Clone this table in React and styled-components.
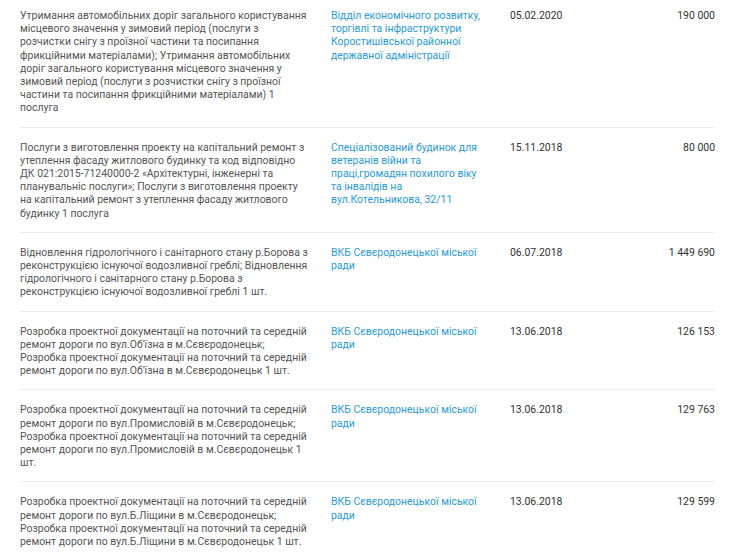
import React from "react"
import styled, { createGlobalStyle } from "styled-components"

const GlobalStyle = createGlobalStyle`
  html, body {
    margin: 0;
    padding: 0;
    background: #fff;
  }
  body {
    font-family: Roboto, "Liberation Sans", Arial, sans-serif;
    font-size: 10.45px;
    line-height: 13.2px;
  }
`

const Table = styled.section`
  width: 695px;
  margin: -4px 0 0 20px;
`

const Row = styled.div`
  display: grid;
  grid-template-columns: 311px 179px 1fr auto;
  padding: 13px 0 12px;
  border-bottom: 1px solid ${p => (p.last ? "transparent" : "#ececec")};
`

const Description = styled.p`
  margin: 0;
  padding-right: 23px;
  color: #555;
`

const Buyer = styled.a`
  display: block;
  padding-right: 24px;
  color: #2b9ad6;
  text-decoration: none;
  cursor: pointer;
`

const Date = styled.span`
  color: #333;
`

const Amount = styled.span`
  color: #333;
  text-align: right;
`

const rows = [
  {
    text: "Утримання автомобільних доріг загального користування місцевого значення у зимовий період (послуги з розчистки снігу з проїзної частини та посипання фрикційними матеріалами); Утримання автомобільних доріг загального користування місцевого значення у зимовий період (послуги з розчистки снігу з проїзної частини та посипання фрикційними матеріалами) 1 послуга",
    buyer: "Відділ економічного розвитку, торгівлі та інфраструктури Коростишівської районної державної адміністрації",
    date: "05.02.2020",
    amount: "190 000",
  },
  {
    text: "Послуги з виготовлення проекту на капітальний ремонт з утеплення фасаду житлового будинку та код відповідно ДК 021:2015-71240000-2 «Архітектурні, інженерні та планувальніс послуги»; Послуги з виготовлення проекту на капітальний ремонт з утеплення фасаду житлового будинку 1 послуга",
    buyer: "Спеціалізований будинок для ветеранів війни та праці,громадян похилого віку та інвалідів на вул.Котельникова, 32/11",
    date: "15.11.2018",
    amount: "80 000",
  },
  {
    text: "Відновлення гідрологічного і санітарного стану р.Борова з реконструкцією існуючої водозливної греблі; Відновлення гідрологічного і санітарного стану р.Борова з реконструкцією існуючої водозливної греблі 1 шт.",
    buyer: "ВКБ Сєвєродонецької міської ради",
    date: "06.07.2018",
    amount: "1 449 690",
  },
  {
    text: "Розробка проектної документації на поточний та середній ремонт дороги по вул.Об'їзна в м.Сєвєродонецьк; Розробка проектної документації на поточний та середній ремонт дороги по вул.Об'їзна в м.Сєвєродонецьк 1 шт.",
    buyer: "ВКБ Сєвєродонецької міської ради",
    date: "13.06.2018",
    amount: "126 153",
  },
  {
    text: "Розробка проектної документації на поточний та середній ремонт дороги по вул.Промисловій в м.Сєвєродонецьк; Розробка проектної документації на поточний та середній ремонт дороги по вул.Промисловій в м.Сєвєродонецьк 1 шт.",
    buyer: "ВКБ Сєвєродонецької міської ради",
    date: "13.06.2018",
    amount: "129 763",
  },
  {
    text: "Розробка проектної документації на поточний та середній ремонт дороги по вул.Б.Ліщини в м.Сєвєродонецьк; Розробка проектної документації на поточний та середній ремонт дороги по вул.Б.Ліщини в м.Сєвєродонецьк 1 шт.",
    buyer: "ВКБ Сєвєродонецької міської ради",
    date: "13.06.2018",
    amount: "129 599",
  },
]

const App = () => {
  return (
    <>
      <GlobalStyle />
      <Table>
        {rows.map((row, index) => (
          <Row key={index} last={index === rows.length - 1}>
            <Description>{row.text}</Description>
            <Buyer>{row.buyer}</Buyer>
            <Date>{row.date}</Date>
            <Amount>{row.amount}</Amount>
          </Row>
        ))}
      </Table>
    </>
  )
}

export default App
